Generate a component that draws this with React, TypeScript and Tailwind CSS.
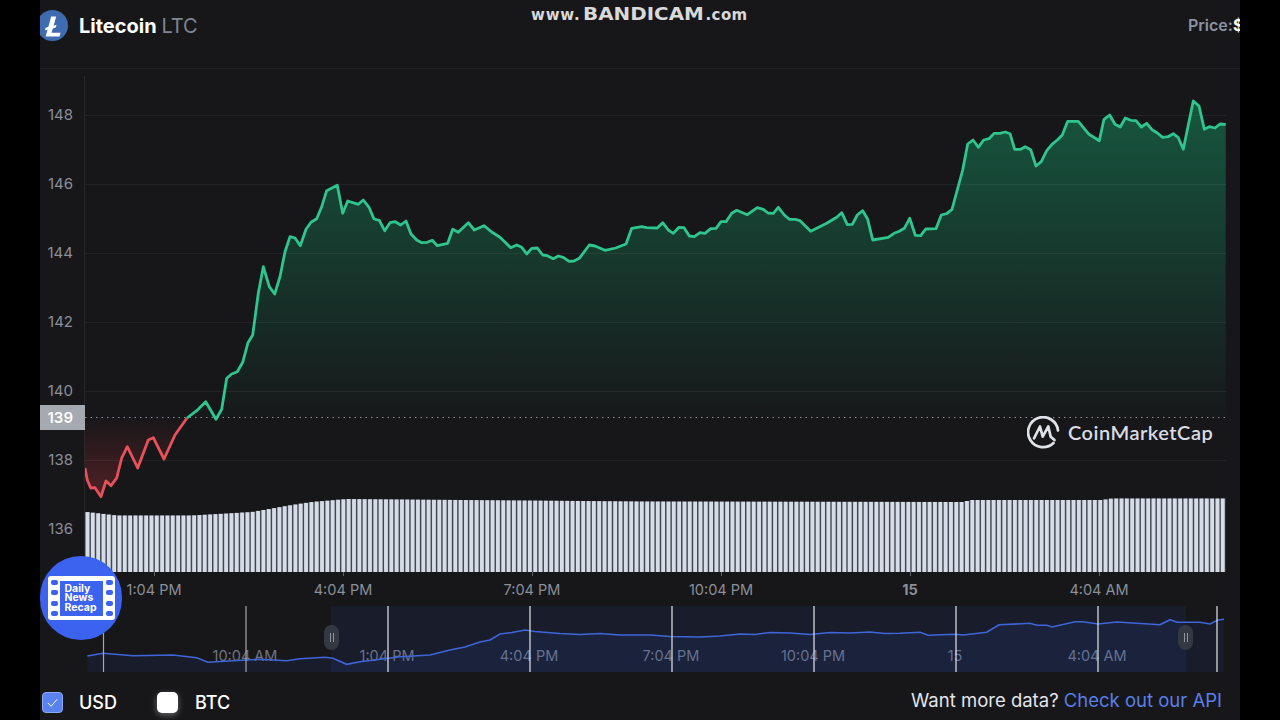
import React from 'react';

const redLine = [
  [85, 468], [87.3, 480], [90.7, 488], [95, 487.7], [101, 496.7], [106, 481], [111, 485.7], [116.7, 478],
  [121.7, 458], [127.3, 446.7], [137.7, 468], [148.3, 440], [153.3, 437.7], [164, 459], [175, 435], [187, 418],
];

const greenLine = [
  [187, 418], [196.7, 410.7], [205.7, 401.7], [216, 419.3], [221.7, 409.3], [226.7, 378.3], [231.7, 374],
  [237.3, 371.7], [242.7, 362.3], [248, 342.7], [252.7, 335], [258.3, 293.3], [263.3, 266.7], [269.3, 286.7],
  [274.7, 294], [280, 276.7], [285, 251.7], [290, 236.7], [295, 238], [300.3, 245.7], [306, 229.3], [311, 222.3],
  [316.7, 218.7], [321.7, 206.7], [326.7, 190.7], [337.3, 185.3], [342.7, 213.3], [347.7, 201], [358.3, 204.3],
  [363.3, 200], [369, 207.3], [374, 219], [379.3, 220.3], [384.7, 230.7], [390, 222.7], [395.3, 221.7],
  [400.7, 225], [406, 221], [411, 234], [416.7, 240], [421.7, 242.7], [427.3, 242.3], [432.3, 240.3],
  [437.3, 245.7], [447.7, 243.3], [452.7, 229.3], [458.3, 232.3], [468.3, 222.7], [474.3, 230], [484, 225.7],
  [491.7, 232], [500, 237.3], [510.7, 247.7], [516.7, 245], [521.7, 247.3], [526.7, 254], [531.7, 248.3],
  [537.3, 248], [542.7, 255], [547.3, 255.7], [553.3, 258.7], [558.3, 256], [563.3, 257.3], [569, 261.3],
  [574, 261], [579.3, 258.3], [589.3, 245], [595, 246], [605, 250.3], [615.7, 248], [626, 244], [631.7, 228.3],
  [641.7, 226.7], [646.7, 227.7], [657.3, 228], [662.7, 222.7], [668.3, 230], [673.3, 233.3], [679, 227.3],
  [684, 227.7], [689.3, 236], [694.3, 236.7], [700, 232.7], [705, 233.3], [710.7, 228.7], [716, 228.3],
  [721, 221.7], [726, 221.7], [731.7, 213.3], [736.7, 210.3], [747.3, 214.7], [757.3, 207.7], [763.3, 209.3],
  [768, 213], [773.3, 213.3], [778.3, 207.3], [784.3, 215], [789.3, 219.3], [795, 219.3], [800, 220.7],
  [810.7, 231.3], [826.7, 223.3], [836.7, 217.3], [841.7, 212.7], [847.3, 224.7], [852.3, 224.3], [857.3, 215],
  [862.7, 210.7], [867.7, 219.3], [872.7, 240], [888.3, 237.3], [894, 233.3], [899.3, 231.3], [904.3, 228.3],
  [909.7, 218.3], [915.3, 235.3], [920.7, 235.7], [925.7, 229], [936, 228.7], [941.3, 215], [946.7, 213.7],
  [952, 209.3], [962.7, 170], [967.7, 144], [973, 140], [978.3, 147.3], [983.7, 140], [989, 138.7], [994.3, 133.3],
  [1000, 133.3], [1005.3, 132], [1010, 133.7], [1014.7, 149.3], [1020.7, 149.3], [1025.3, 146.7], [1030.7, 149.7],
  [1036, 166], [1041.3, 161.7], [1046.7, 150.7], [1052, 144.3], [1057.3, 140], [1062.3, 135], [1067.7, 121.3],
  [1078.3, 121.3], [1089, 134.3], [1099.3, 140.7], [1104, 119.3], [1109.7, 115], [1115, 124.3], [1120.3, 127],
  [1125.3, 118], [1130.7, 120.3], [1136, 120.7], [1141.3, 127], [1146.7, 123.3], [1152, 129.7], [1157.3, 133],
  [1162.7, 137.3], [1168, 136.7], [1173.3, 133.7], [1178.3, 137.7], [1183.3, 149.3], [1188.3, 125], [1193.3, 101],
  [1199, 106], [1204.3, 129.3], [1209.3, 126.7], [1215, 128], [1220, 124], [1225.7, 124.3],
];

const navLine = [
  [87.3, 656], [103, 653.3], [133, 655.7], [173, 655], [196.7, 657.7], [208, 662.3], [233, 660.7], [260, 659.3],
  [286.7, 660.7], [300, 658.7], [325, 657.3], [333, 658.3], [346.7, 664.3], [360, 661.7], [400, 656.7], [430, 655],
  [450, 650], [465, 647], [480, 642], [490, 640], [500, 634], [512, 632.5], [525, 630], [535, 631.5], [560, 633.5],
  [580, 634.5], [600, 633.5], [620, 635], [650, 635], [670, 636.5], [700, 637], [720, 636], [740, 634], [755, 634.5],
  [770, 632.5], [790, 633], [810, 634.5], [830, 632.5], [850, 633], [870, 632], [885, 633.5], [900, 633.3], [920, 632.3],
  [928, 635.3], [955, 634.3], [963, 635], [986.7, 632.3], [999, 624.7], [1030, 623.3], [1037, 625.3], [1047, 625.3],
  [1052, 627], [1075, 621.7], [1083, 621.7], [1098, 624], [1117, 622], [1160, 624.7], [1170, 619.7], [1177, 622.3],
  [1200, 622.3], [1210, 624], [1218, 620], [1224, 619.3],
];

// top of the volume bars along the x axis
const volumeTops = [
  [85, 512], [115, 515.5], [190, 515.5], [225, 513.5], [250, 512], [290, 505], [310, 502], [345, 499], [400, 499.5],
  [640, 501.5], [960, 502], [970, 500], [1100, 500], [1110, 498.5], [1226, 498.5],
];

function toPath(points: number[][]) {
  return points.map((p, i) => `${i === 0 ? 'M' : 'L'}${p[0]} ${p[1]}`).join(' ');
}

function volumeTop(x: number) {
  for (let i = 1; i < volumeTops.length; i++) {
    const [x0, y0] = volumeTops[i - 1];
    const [x1, y1] = volumeTops[i];
    if (x <= x1) return y0 + ((x - x0) / (x1 - x0)) * (y1 - y0);
  }
  return 498.5;
}

const bars = Array.from({ length: 214 }, (_, i) => 85.6 + i * 5.33);
const yLabels = ['148', '146', '144', '142', '140', '138', '136'];
const xLabels = ['1:04 PM', '4:04 PM', '7:04 PM', '10:04 PM', '15', '4:04 AM'];
const navLabels = ['10:04 AM', '1:04 PM', '4:04 PM', '7:04 PM', '10:04 PM', '15', '4:04 AM'];
const navTicks = [103.5, 246, 388, 530, 672, 814, 956, 1098, 1217];
const filmHoles = [0, 1, 2, 3];

function MainPlot() {
  return (
    <svg viewBox="85 69 1141 503" className="block w-[1141px] h-[503px]">
      <defs>
        <linearGradient id="greenFill" gradientUnits="userSpaceOnUse" x1="0" y1="100" x2="0" y2="417">
          <stop offset="0" stopColor="#16c784" stopOpacity="0.36" />
          <stop offset="1" stopColor="#16c784" stopOpacity="0.01" />
        </linearGradient>
        <linearGradient id="redFill" gradientUnits="userSpaceOnUse" x1="0" y1="417" x2="0" y2="497">
          <stop offset="0" stopColor="#ea3943" stopOpacity="0" />
          <stop offset="1" stopColor="#ea3943" stopOpacity="0.28" />
        </linearGradient>
      </defs>
      <path d={`${toPath(greenLine)} L1225.7 417 L187 417 Z`} fill="url(#greenFill)" />
      <path d={`${toPath(redLine)} L187 417 L85 417 Z`} fill="url(#redFill)" />
      {[115.5, 184.5, 253.5, 322.5, 391.5, 460.5].map((y) => (
        <line key={y} x1="85" x2="1226" y1={y} y2={y} stroke="#ffffff" strokeOpacity="0.055" />
      ))}
      <line x1="85" x2="1226" y1="417.5" y2="417.5" stroke="#8a8f99" strokeDasharray="1.5 4" />
      <path d={toPath(redLine)} fill="none" stroke="#e8505b" strokeWidth="2.8" strokeLinejoin="round" />
      <path d={toPath(greenLine)} fill="none" stroke="#2fc58e" strokeWidth="2.8" strokeLinejoin="round" />
      {bars.map((x) => (
        <g key={x}>
          <rect x={x - 0.8} y={volumeTop(x)} width="5.33" height={572 - volumeTop(x)} fill="#50555f" />
          <rect x={x} y={volumeTop(x)} width="3.8" height={572 - volumeTop(x)} fill="#d7dde8" />
        </g>
      ))}
    </svg>
  );
}

function NavPlot() {
  return (
    <svg viewBox="87 606 1137 66" className="absolute inset-0 w-[1137px] h-[66px]">
      <path d={`${toPath(navLine)} L1224 672 L87.3 672 Z`} fill="#3861fb" fillOpacity="0.08" />
      <rect x="331" y="606" width="855" height="66" fill="#3861fb" fillOpacity="0.08" />
      <path d={toPath(navLine)} fill="none" stroke="#3f66d8" strokeWidth="1.6" />
      {navTicks.map((x) => (
        <line key={x} x1={x} x2={x} y1="606" y2="672" stroke={x < 331 ? '#a3a7af' : '#e6e8ec'} strokeWidth="1.2" />
      ))}
    </svg>
  );
}

function NavHandle({ className }: { className: string }) {
  return (
    <div className={`absolute top-[19px] w-[15px] h-[25px] rounded-full bg-[#343843] flex items-center justify-center gap-[2px] ${className}`}>
      <span className="w-px h-[9px] bg-[#8f95a1]" />
      <span className="w-px h-[9px] bg-[#8f95a1]" />
    </div>
  );
}

function LitecoinLogo() {
  return (
    <div className="w-[28px] h-[31px] overflow-hidden shrink-0">
      <svg viewBox="0 0 31 31" className="w-[31px] h-[31px] -ml-[3px] block">
        <circle cx="15.5" cy="15.5" r="15.5" fill="#3f6cb0" />
        <path d="M14.2 6.5h5l-2.6 9.3 3-1-.8 2.8-3 1-1.3 4.2h9l-1 3.7H8.6l2-7-2.6.9.7-2.6 2.7-1z" fill="#fff" />
      </svg>
    </div>
  );
}

function CmcLogo() {
  return (
    <svg viewBox="0 0 33 33" className="w-[33px] h-[33px]" fill="none" stroke="#dfe2e7" strokeWidth="2.7" strokeLinecap="round" strokeLinejoin="round">
      <path d="M31 14.5A15 15 0 1 0 26.5 27" />
      <path d="M7 22.3L13 10.5L15.7 20.7L21.3 10.5L23.7 20.7L27.5 24" />
    </svg>
  );
}

function RecapBadge() {
  return (
    <div className="absolute left-0 top-[556px] w-[82px] h-[84px] rounded-full bg-[#3b63f0] flex items-center justify-center">
      <div className="relative w-[67px] h-[44px] rounded-[3px] bg-white flex justify-center items-center">
        <div className="absolute left-[3px] top-[4px] bottom-[4px] flex flex-col justify-between">
          {filmHoles.map((n) => (
            <span key={n} className="block w-[7px] h-[5px] rounded-[2px] bg-[#3b63f0]" />
          ))}
        </div>
        <div className="absolute right-[2px] top-[4px] bottom-[4px] flex flex-col justify-between">
          {filmHoles.map((n) => (
            <span key={n} className="block w-[7px] h-[5px] rounded-[2px] bg-[#3b63f0]" />
          ))}
        </div>
        <div className="w-[43px] h-[35px] bg-[#3b63f0] pl-[5px] pt-[3px] text-[10.5px] leading-[9.5px] font-bold text-white">
          Daily
          <br />
          News
          <br />
          Recap
        </div>
      </div>
    </div>
  );
}

export default function App() {
  return (
    <div className="w-[1280px] h-[720px] bg-black flex justify-center overflow-hidden [font-family:Inter,sans-serif]">
      <div className="relative w-[1200px] h-[720px] bg-[#171719] overflow-hidden">
        <header className="h-[69px] border-b border-[#202226] flex items-start pt-[10px]">
          <LitecoinLogo />
          <div className="ml-[11px] mt-[3px] text-[20px] leading-[26px] font-bold text-white">
            Litecoin <span className="font-normal text-[#7f8693]">LTC</span>
          </div>
          <div className="ml-auto mt-[4px] flex text-[16px] leading-[22px] font-semibold text-[#8b92a1] whitespace-nowrap w-[52px]">
            Price:<span className="font-bold text-white">$</span>
          </div>
        </header>

        <div className="absolute top-[2px] left-[491px] flex items-baseline text-[#d9d9d9] whitespace-nowrap [font-family:'DejaVu_Sans',sans-serif] font-bold">
          <span className="text-[15px] tracking-[0.8px]">www.</span>
          <span className="inline-block w-[123px] ml-[2px] text-[17px] origin-left scale-x-[1.17]">BANDICAM</span>
          <span className="text-[15px] tracking-[0.4px]">.com</span>
        </div>

        <div className="flex h-[503px]">
          <div className="relative w-[45px] shrink-0 pt-[12px] text-[15px] text-[#8a8f99]">
            <div className="absolute left-[44px] top-[7px] bottom-0 w-px bg-[#26282c]" />
            {yLabels.map((label) => (
              <div key={label} className="h-[69px] flex items-center justify-end pr-[12px]">
                {label}
              </div>
            ))}
            <div className="absolute left-0 top-[336px] w-[45px] h-[25px] pt-[2px] bg-[#a5a9b2] flex items-center justify-end pr-[12px] font-semibold text-white">
              139
            </div>
          </div>
          <MainPlot />
        </div>

        <div className="h-[34px] flex pl-[19.5px]">
          {xLabels.map((label) => (
            <div key={label} className="w-[189px] flex flex-col items-center">
              <span className="w-px h-[4px] bg-[#5c606a]" />
              <span className={`mt-[4px] text-[14.5px] leading-[20px] text-[#8a8f99] ${label === '15' ? 'font-bold' : ''}`}>
                {label}
              </span>
            </div>
          ))}
        </div>

        <div className="relative h-[66px] w-[1137px] ml-[47px] flex pl-[87px] pt-[40px]">
          {navLabels.map((label) => (
            <div key={label} className="w-[142px] text-center text-[14.5px] leading-[20px] text-[#6f7480]">
              {label}
            </div>
          ))}
          <NavPlot />
          <NavHandle className="left-[237px]" />
          <NavHandle className="left-[1091px]" />
        </div>

        <div className="h-[48px] flex items-start">
          <div className="mt-[20px] ml-[2px] w-[21px] h-[21px] rounded-[4px] bg-[#5a82ef] border border-[#8ea9f5] flex items-center justify-center">
            <svg viewBox="0 0 16 16" className="w-[15px] h-[15px]" fill="none" stroke="#fff" strokeWidth="1">
              <path d="M3 8.5L6.5 12L13 4.5" />
            </svg>
          </div>
          <span className="ml-[16px] mt-[19px] text-[18px] leading-[24px] font-medium text-white">USD</span>
          <div className="ml-[40px] mt-[20px] w-[21px] h-[21px] rounded-[5px] bg-white shadow-[0_2px_6px_rgba(255,255,255,0.35)]" />
          <span className="ml-[17px] mt-[19px] text-[18px] leading-[24px] font-medium text-white">BTC</span>
          <div className="ml-auto mr-[18px] mt-[16px] text-[18.5px] leading-[24px] text-[#e3e5ea]">
            Want more data? <span className="text-[#5a7fe8]">Check out our API</span>
          </div>
        </div>

        <div className="absolute left-[987px] top-[416px] flex items-center gap-[8px]">
          <CmcLogo />
          <span className="text-[20px] leading-[33px] font-semibold text-[#d9dce2] [font-family:Lato,sans-serif] tracking-[0.5px]">
            CoinMarketCap
          </span>
        </div>

        <RecapBadge />
      </div>
    </div>
  );
}
